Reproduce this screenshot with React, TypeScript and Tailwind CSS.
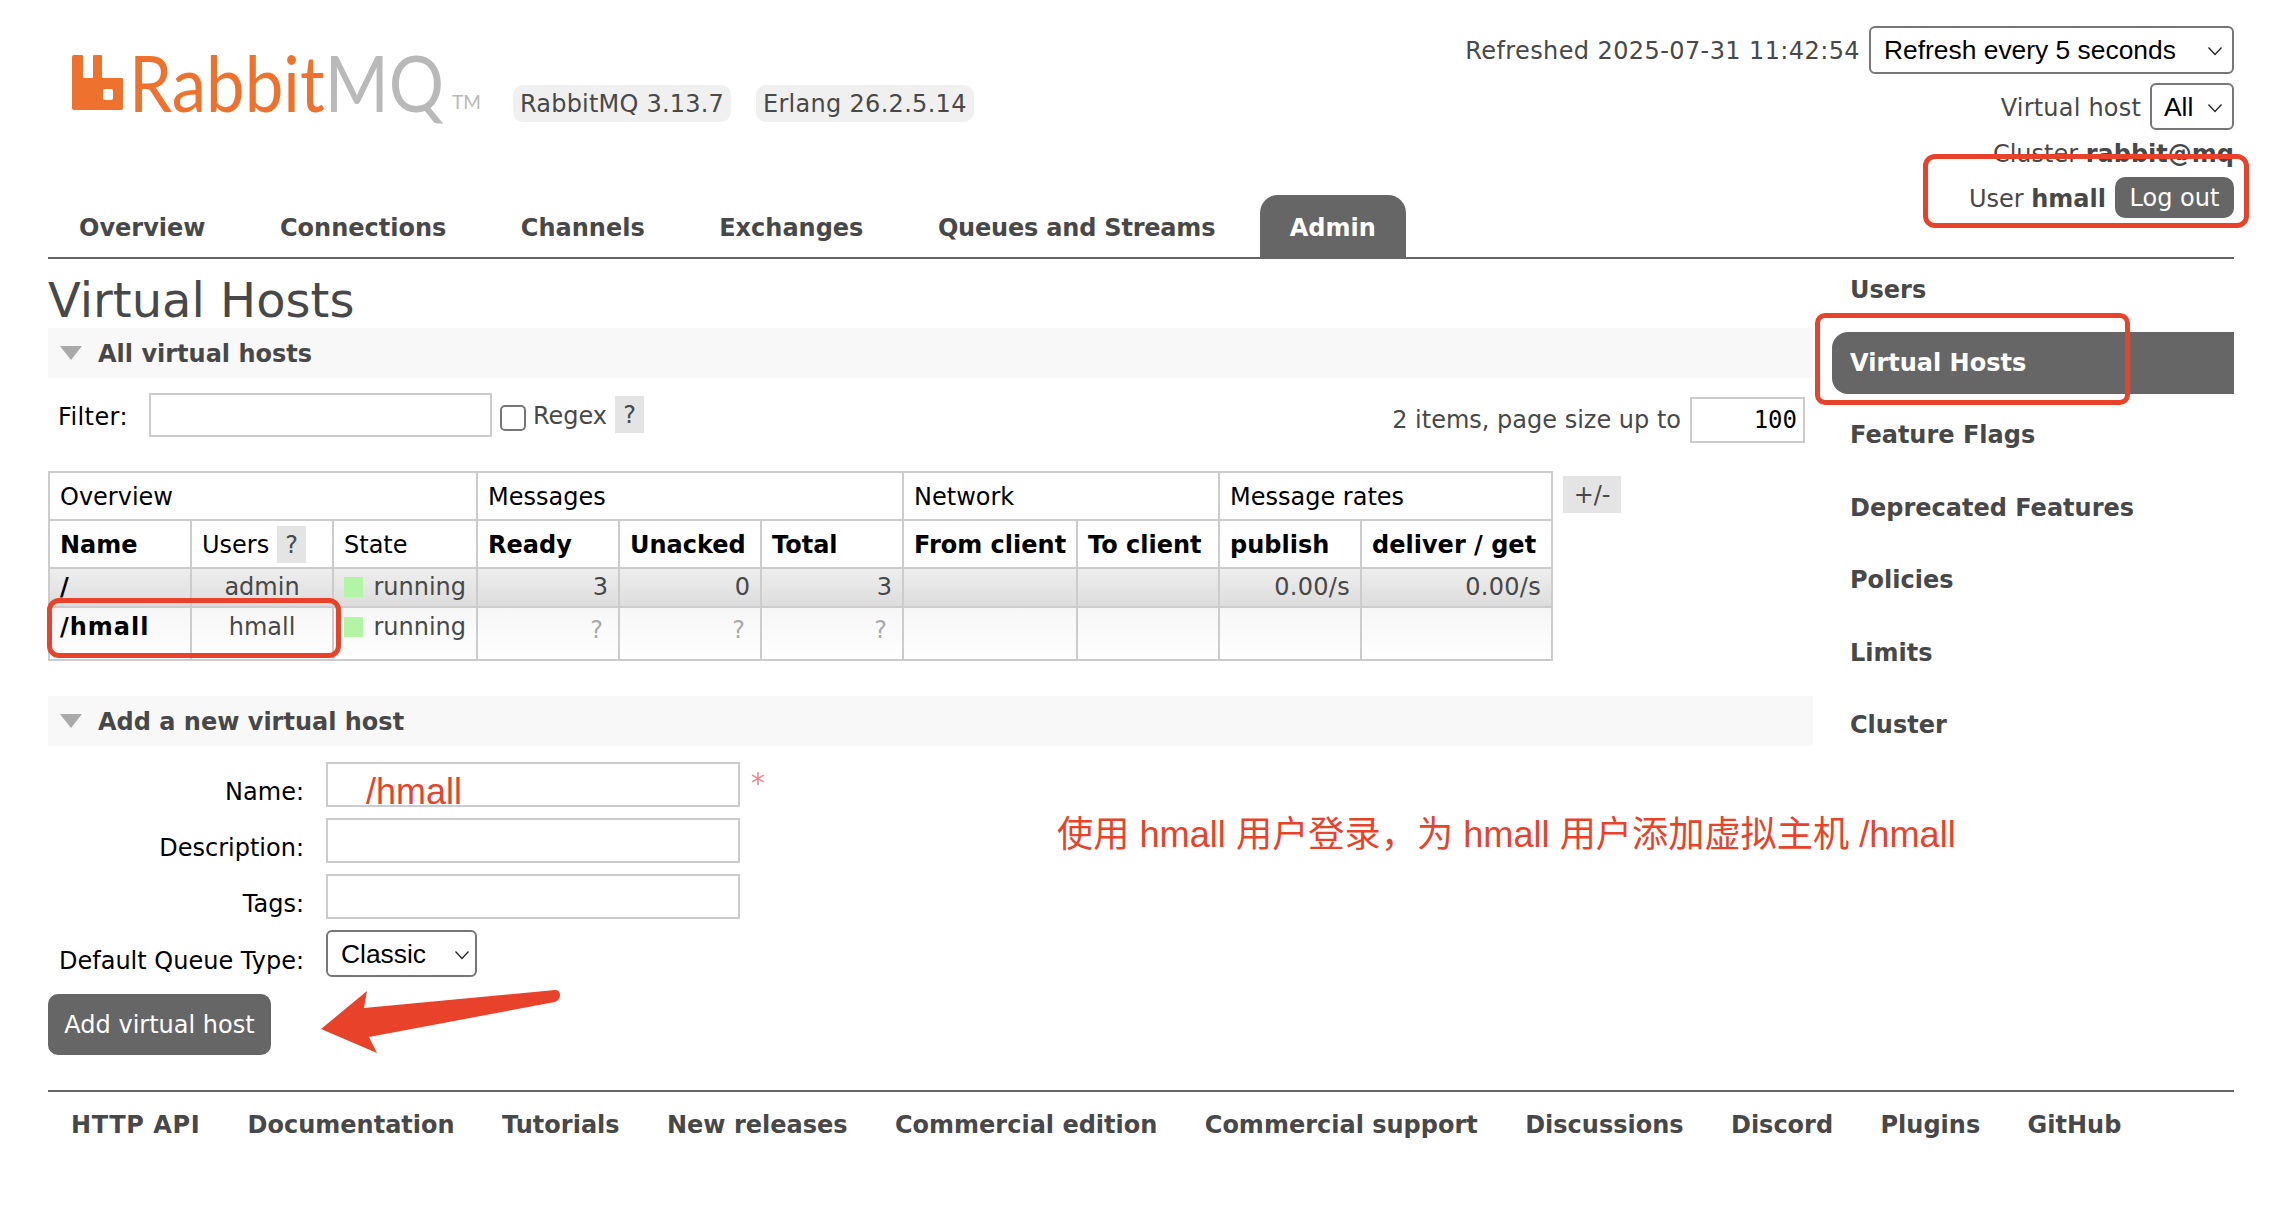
const sans = "font-['DejaVu_Sans',Verdana,sans-serif]";

function Chevron({ className }: { className: string }) {
  return (
    <svg viewBox="0 0 16 10" className={className} fill="none" stroke="#222" strokeWidth="1.3">
      <path d="M1.5 1.5l6.5 7 6.5-7" />
    </svg>
  );
}

function Select({ value, className, chevron }: { value: string; className: string; chevron: string }) {
  return (
    <div className="relative">
      <select
        defaultValue={value}
        className={`appearance-none bg-white border-2 border-[#767676] rounded-[6px] text-black text-[26.4px] font-['Liberation_Sans',Arial,sans-serif] outline-none ${className}`}
      >
        <option>{value}</option>
      </select>
      <Chevron className={`absolute w-[16px] h-[10px] pointer-events-none ${chevron}`} />
    </div>
  );
}

function Logo() {
  return (
    <div className="flex items-start">
      <svg viewBox="0 0 52 55" className="w-[52px] h-[55px]">
        <path
          fillRule="evenodd"
          fill="#ee722e"
          d="M2 0h8a1 1 0 0 1 1 1v21a1 1 0 0 0 1 1h8a1 1 0 0 0 1-1V1a1 1 0 0 1 1-1h7a1 1 0 0 1 1 1v21a1 1 0 0 0 1 1h19a1 1 0 0 1 1 1v29a2 2 0 0 1-2 2H2a2 2 0 0 1-2-2V2a2 2 0 0 1 2-2zM33 34a2 2 0 0 0-2 2v7a2 2 0 0 0 2 2h6a2 2 0 0 0 2-2v-7a2 2 0 0 0-2-2z"
        />
      </svg>
      <div className="ml-[5px] w-[313px] h-[55px] flex items-end whitespace-nowrap font-['Lato',sans-serif] text-[78px] leading-[55px] scale-x-[0.885] origin-left">
        <span className="text-[#ee722e]">Rabbit</span>
        <span className="text-[#b9b9b9]">MQ</span>
      </div>
      <span className="ml-[10px] w-[28px] mt-[39px] text-[19px] leading-[16px] text-[#b9b9b9] font-['Lato',sans-serif]">TM</span>
    </div>
  );
}

function Help({ label = "?", className = "" }: { label?: string; className?: string }) {
  return <span className={`inline-flex items-center justify-center bg-[#e4e4e4] text-[#484848] ${className}`}>{label}</span>;
}

function SectionHead({ title }: { title: string }) {
  return (
    <div className="h-[50px] bg-[#f8f8f8] flex items-center pl-[12px]">
      <svg viewBox="0 0 22 14" className="w-[22px] h-[14px]">
        <path d="M0 0h22L11 14z" fill="#aaa" />
      </svg>
      <h2 className="ml-[16px] pt-[1px] text-[24px] font-bold text-[#484848]">{title}</h2>
    </div>
  );
}

const tabs = ["Overview", "Connections", "Channels", "Exchanges"];
const sideItems = ["Users", "Virtual Hosts", "Feature Flags", "Deprecated Features", "Policies", "Limits", "Cluster"];
const footerLinks = ["Documentation", "Tutorials", "New releases", "Commercial edition", "Commercial support", "Discussions", "Discord", "Plugins", "GitHub"];
const colWidths = [142, 142, 144, 142, 142, 142, 174, 142, 142, 191];

const th = "border-2 border-[#ccc] pl-[10px] pr-[8px] pt-[1px] text-left align-middle overflow-hidden whitespace-nowrap";
const td = "border-2 border-[#ccc] pl-[10px] pr-[10px] pt-[3px] align-top overflow-hidden whitespace-nowrap";
const tdLow = "border-2 border-[#ccc] pl-[10px] pr-[10px] pt-[4px] align-top overflow-hidden whitespace-nowrap";
const tdUnknown = "border-2 border-[#ccc] pl-[10px] pr-[15px] pt-[7px] align-top overflow-hidden whitespace-nowrap text-right text-[#aaa]";

function State() {
  return (
    <span className="flex items-center">
      <span className="w-[20px] h-[20px] bg-[#b2f5a4] mr-[10px]" />
      running
    </span>
  );
}

function VhostTable() {
  return (
    <table className="table-fixed border-collapse w-[1503px] text-[24px] text-black">
      <colgroup>
        {colWidths.map((w, i) => (
          <col key={i} style={{ width: w }} />
        ))}
      </colgroup>
      <thead>
        <tr className="h-[48px]">
          <th colSpan={3} className={`${th} font-normal`}>Overview</th>
          <th colSpan={3} className={`${th} font-normal`}>Messages</th>
          <th colSpan={2} className={`${th} font-normal`}>Network</th>
          <th colSpan={2} className={`${th} font-normal`}>Message rates</th>
        </tr>
        <tr className="h-[48px]">
          <th className={th}>Name</th>
          <th className={`${th} font-normal`}>
            <span className="flex items-center">
              Users
              <Help className="ml-[8px] w-[29px] h-[37px]" />
            </span>
          </th>
          <th className={`${th} font-normal`}>State</th>
          <th className={th}>Ready</th>
          <th className={th}>Unacked</th>
          <th className={th}>Total</th>
          <th className={th}>From client</th>
          <th className={th}>To client</th>
          <th className={th}>publish</th>
          <th className={th}>deliver / get</th>
        </tr>
      </thead>
      <tbody className="text-[#484848]">
        <tr className="h-[39px] bg-gradient-to-b from-[#efefef] to-[#dcdcdc] leading-[30px]">
          <td className={`${td} font-bold text-black`}>/</td>
          <td className={`${td} text-center`}>admin</td>
          <td className={td}>
            <State />
          </td>
          <td className={`${td} text-right`}>3</td>
          <td className={`${td} text-right`}>0</td>
          <td className={`${td} text-right`}>3</td>
          <td className={td} />
          <td className={td} />
          <td className={`${td} text-right tracking-[0.3px]`}>0.00/s</td>
          <td className={`${td} text-right tracking-[0.3px]`}>0.00/s</td>
        </tr>
        <tr className="h-[53px] bg-gradient-to-b from-[#f6f6f6] to-white leading-[30px]">
          <td className={`${tdLow} font-bold text-black tracking-[1px]`}>/hmall</td>
          <td className={`${tdLow} text-center`}>hmall</td>
          <td className={tdLow}>
            <State />
          </td>
          <td className={tdUnknown}>?</td>
          <td className={tdUnknown}>?</td>
          <td className={tdUnknown}>?</td>
          <td className={td} />
          <td className={td} />
          <td className={td} />
          <td className={td} />
        </tr>
      </tbody>
    </table>
  );
}

function FormRow({ label, children, labelClass = "pt-[16px]" }: { label: string; children: React.ReactNode; labelClass?: string }) {
  return (
    <div className="flex gap-[22px]">
      <label className={`w-[256px] text-right text-black whitespace-nowrap ${labelClass}`}>{label}</label>
      {children}
    </div>
  );
}

const textInput = "w-[414px] h-[45px] border-2 border-[#ccc] bg-white outline-none";

export default function App() {
  return (
    <div className={`relative w-[2286px] h-[1210px] bg-white overflow-hidden text-[24px] leading-[28px] text-[#484848] ${sans}`}>
      <div className="pl-[48px] pr-[52px]">
        <header className="flex justify-between h-[259px] border-b-[2px] border-[#666]">
          <div className="flex flex-col">
            <div className="h-[195px] pl-[24px] pt-[55px] flex items-start">
              <Logo />
              <span className="ml-[33px] mt-[30px] h-[37px] px-[7px] pt-[1px] flex items-center rounded-[10px] bg-[#f0f0f0] whitespace-nowrap tracking-[0.2px]">RabbitMQ 3.13.7</span>
              <span className="ml-[25px] mt-[30px] h-[37px] px-[7px] pt-[1px] flex items-center rounded-[10px] bg-[#f0f0f0] whitespace-nowrap tracking-[0.3px]">Erlang 26.2.5.14</span>
            </div>
            <nav className="flex gap-[14.5px] h-[62px] pl-[1px]">
              {tabs.map((t) => (
                <a key={t} className="px-[30px] pt-[3px] flex items-center font-bold text-[#484848] whitespace-nowrap">{t}</a>
              ))}
              <a className="px-[30px] pt-[3px] flex items-center font-bold text-[#484848] whitespace-nowrap tracking-[-0.2px]">Queues and Streams</a>
              <a className="px-[30px] pt-[3px] flex items-center font-bold text-white bg-[#666] rounded-t-[18px]">Admin</a>
            </nav>
          </div>
          <div className="flex flex-col items-end pt-[26px]">
            <div className="flex items-center gap-[9px]">
              <span className="pt-[1px] whitespace-nowrap tracking-[0.4px]">Refreshed 2025-07-31 11:42:54</span>
              <Select value="Refresh every 5 seconds" className="w-[365px] h-[48px] pl-[13px]" chevron="right-[11px] top-[20px]" />
            </div>
            <div className="flex items-center gap-[9px] mt-[9px]">
              <span className="pt-[2px] tracking-[0.2px]">Virtual host</span>
              <Select value="All" className="w-[84px] h-[47px] pl-[12px]" chevron="right-[11px] top-[20px]" />
            </div>
            <div className="mt-[10px] whitespace-nowrap">
              Cluster <b>rabbit@mq</b>
            </div>
            <div className="mt-[9px] flex items-center gap-[9px]">
              <span className="pt-[2px]">
                User <b>hmall</b>
              </span>
              <button className="w-[119px] h-[41px] rounded-[10px] bg-[#666] text-white">Log out</button>
            </div>
          </div>
        </header>

        <div className="flex">
          <main className="w-[1765px]">
            <h1 className="mt-[13px] h-[56px] text-[48px] leading-[56px] font-normal text-[#484848]">Virtual Hosts</h1>
            <SectionHead title="All virtual hosts" />
            <div className="mt-[15px] h-[48px] flex items-start">
              <span className="ml-[10px] mt-[10px] text-black tracking-[0.4px]">Filter:</span>
              <input className="ml-[21px] w-[343px] h-[44px] border-2 border-[#ccc] outline-none" />
              <span className="ml-[8px] mt-[12px] w-[26px] h-[26px] rounded-[5px] border-2 border-[#767676] bg-white" />
              <span className="ml-[7px] mt-[9px]">Regex</span>
              <Help className="ml-[8px] mt-[3px] w-[29px] h-[37px]" />
              <span className="ml-auto mt-[13px] whitespace-nowrap">2 items, page size up to</span>
              <input
                defaultValue="100"
                className="ml-[9px] mr-[8px] mt-[4px] w-[115px] h-[46px] border-2 border-[#ccc] text-right pr-[6px] text-black font-['DejaVu_Sans_Mono',monospace] outline-none"
              />
            </div>
            <div className="mt-[30px] flex items-start">
              <VhostTable />
              <Help label="+/-" className="ml-[10px] mt-[5px] w-[58px] h-[37px]" />
            </div>
            <div className="mt-[35px]">
              <SectionHead title="Add a new virtual host" />
            </div>
            <form className="mt-[16px] flex flex-col gap-[11px]">
              <FormRow label="Name:">
                <input className={textInput} />
                <span className="-ml-[11px] pt-[8px] text-[#e88] text-[28px]">*</span>
              </FormRow>
              <FormRow label="Description:">
                <input className={textInput} />
              </FormRow>
              <FormRow label="Tags:">
                <input className={textInput} />
              </FormRow>
              <FormRow label="Default Queue Type:" labelClass="pt-[17px]">
                <Select value="Classic" className="w-[151px] h-[47px] pl-[13px]" chevron="right-[7px] top-[20px]" />
              </FormRow>
            </form>
            <button className="mt-[17px] w-[223px] h-[61px] rounded-[10px] bg-[#666] text-white whitespace-nowrap">Add virtual host</button>
          </main>

          <aside className="flex-1 pl-[19px] flex flex-col gap-[10.5px]">
            {sideItems.map((item) =>
              item === "Virtual Hosts" ? (
                <a key={item} className="h-[62px] flex items-center pl-[18px] bg-[#666] rounded-l-[16px] font-bold text-white">{item}</a>
              ) : (
                <a key={item} className="h-[62px] flex items-center pl-[18px] font-bold text-[#484848]">{item}</a>
              ),
            )}
          </aside>
        </div>

        <footer className="mt-[35px] border-t-[2px] border-[#666] pt-[19px] pl-[23px] flex gap-[47.4px] font-bold">
          <a className="whitespace-nowrap tracking-[0.6px]">HTTP API</a>
          {footerLinks.map((l) => (
            <a key={l} className="whitespace-nowrap">{l}</a>
          ))}
        </footer>
      </div>

      {/* red markup drawn over the screenshot */}
      <div className="absolute left-[1923px] top-[154px] w-[326px] h-[74px] border-[5px] border-[#e8432a] rounded-[12px]" />
      <div className="absolute left-[1815px] top-[313px] w-[315px] h-[92px] border-[5px] border-[#e8432a] rounded-[10px]" />
      <div className="absolute left-[47px] top-[598px] w-[294px] h-[60px] border-[5px] border-[#e8432a] rounded-[12px]" />
      <span className="absolute left-[366px] top-[770px] text-[36px] leading-[44px] text-[#e8432a] font-['Liberation_Sans',sans-serif]">/hmall</span>
      <span className="absolute left-[1057px] top-[813px] text-[36.2px] leading-[44px] whitespace-nowrap text-[#e8432a] font-['Liberation_Sans','Noto_Sans_CJK_SC',sans-serif]">
        使用 hmall 用户登录，为 hmall 用户添加虚拟主机 /hmall
      </span>
      <svg viewBox="0 0 250 70" className="absolute left-[315px] top-[987px] w-[250px] h-[70px]">
        <path fill="#e8432a" d="M6 42 52 4 49 21 240 3Q245 3 245 8 245 13 240 15L54 50 62 66z" />
      </svg>
    </div>
  );
}
